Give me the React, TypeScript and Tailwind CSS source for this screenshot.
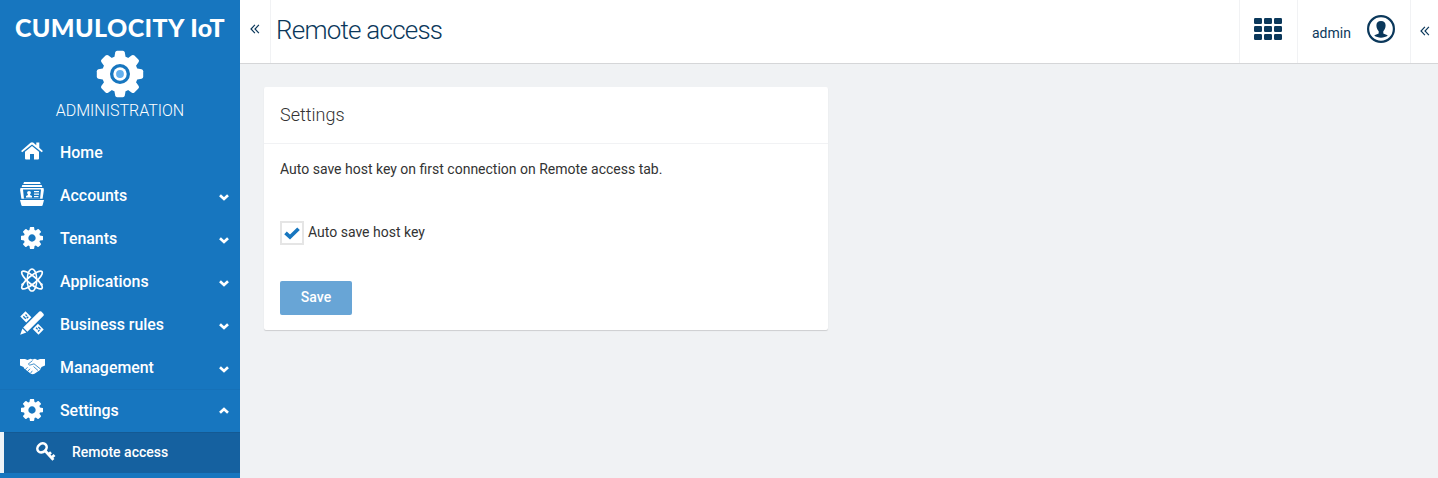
import type { ReactNode } from "react";

const TEETH = [0, 45, 90, 135, 180, 225, 270, 315];

function BigGear() {
  return (
    <svg width="48" height="48" viewBox="0 0 48 48" className="block">
      <circle cx="24" cy="24" r="14" fill="none" stroke="currentColor" strokeWidth="8" />
      {TEETH.map((a) => (
        <path
          key={a}
          transform={`rotate(${a} 24 24)`}
          d="M18 9.500 L19.200 2.400 Q19.500 0.800 21.200 0.800 H26.800 Q28.500 0.800 28.800 2.400 L30 9.500 Z"
          fill="currentColor"
        />
      ))}
      <circle cx="24" cy="24" r="6.700" fill="currentColor" />
      <circle cx="24" cy="24" r="3.900" fill="#64b0ee" />
    </svg>
  );
}

function Gear() {
  return (
    <svg width="22" height="22" viewBox="128 128 1536 1536" fill="currentColor" className="-mt-[2px]">
      <path d="M1152 896q0-106-75-181t-181-75-181 75-75 181 75 181 181 75 181-75 75-181zm512-109v222q0 12-8 23t-20 13l-185 28q-19 54-39 91 35 50 107 138 10 12 10 25t-9 23q-27 37-99 108t-94 71q-12 0-26-9l-138-108q-44 23-91 38-16 136-29 186-7 28-36 28h-222q-14 0-24.500-8.500t-11.500-21.500l-28-184q-49-16-90-37l-141 107q-10 9-25 9-14 0-25-11-126-114-165-168-7-10-7-23 0-12 8-23 15-21 51-66.500t54-70.500q-27-50-41-99l-183-27q-13-2-21-12.500t-8-23.500v-222q0-12 8-23t19-13l186-28q14-46 39-92-40-57-107-138-10-12-10-24 0-10 9-23 26-36 98.500-107.500t94.500-71.500q13 0 26 10l138 107q44-23 91-38 16-136 29-186 7-28 36-28h222q14 0 24.500 8.500t11.500 21.500l28 184q49 16 90 37l142-107q9-9 24-9 13 0 25 10 129 119 165 170 7 8 7 22 0 12-8 23-15 21-51 66.500t-54 70.500q26 50 41 98l183 28q13 2 21 12.500t8 23.500z" />
    </svg>
  );
}

function Home() {
  return (
    <svg width="24" height="24" viewBox="0 0 24 24" fill="currentColor" className="-mt-[3px]">
      <path d="M12 6.900 L19 12.800 V19.500 Q19 20.500 18 20.500 H14 V15 H10 V20.500 H6 Q5 20.500 5 19.500 V12.800 Z" />
      <path d="M1.100 12 L10.500 3.800 Q12 2.600 13.500 3.800 L16.300 6.200 V3.400 H19.300 V8.800 L22.900 12 L21.800 13.300 L12 5.400 L2.200 13.300 Z" />
    </svg>
  );
}

function Accounts() {
  return (
    <svg width="24" height="24" viewBox="0 0 24 24" fill="currentColor" className="-mt-[4px]">
      <path d="M4 0 H20 L20.700 2 H3.300 Z M2.300 3 H21.700 L22.300 5 H1.700 Z" />
      <path fillRule="evenodd" d="M0.500 6 H23.500 L23.900 8 L22.600 16.800 H1.400 L0.100 8 Z M3 7.500 L4 17 H20 L21 7.500 Z" />
      <circle cx="9" cy="10.800" r="1.900" />
      <path d="M8 11 H10 V13 L12 14 V15.500 H6 V14 L8 13 Z M14 9 H19 V10.200 H14 Z M14 11.500 H19 V12.700 H14 Z M14 14 H18.500 V15.200 H14 Z" />
      <path d="M0 18 H24 L22.700 23 Q22.500 24 21.500 24 H2.500 Q1.500 24 1.300 23 Z" />
    </svg>
  );
}

function Atom() {
  return (
    <svg width="24" height="24" viewBox="0 0 24 24" fill="none" stroke="currentColor" strokeWidth="1.700" className="-mt-[3px]">
      <ellipse cx="12" cy="12" rx="13" ry="3.900" transform="rotate(40 12 12)" />
      <ellipse cx="12" cy="12" rx="13" ry="3.900" transform="rotate(-40 12 12)" />
      <ellipse cx="12" cy="12" rx="4.800" ry="11.100" strokeWidth="1.500" />
      <circle cx="2.500" cy="16.500" r="1.200" fill="currentColor" stroke="none" />
      <circle cx="21.500" cy="16.500" r="1.200" fill="currentColor" stroke="none" />
    </svg>
  );
}

function PencilRuler() {
  return (
    <svg width="24" height="24" viewBox="0 0 24 24" fill="currentColor" className="-mt-[3px]">
      <path d="M5.500 0.300 L11.400 6.200 L6.200 11.400 L0.300 5.500 Z M18 12.800 L23.700 18.500 L18.500 23.700 L12.800 18 Z" />
      <path d="M3.300 5.300 L5.800 7.800 M5.500 3.500 L7 5 M8.300 5.700 L6.700 7.300 M16 16.700 L17.700 18.400 M18.300 16 L20.500 18.200 M18 20.500 L19.500 19" stroke="#1776bf" strokeWidth="1.300" />
      <path d="M19.300 0.500 Q20.400 -0.200 21.300 0.600 L23.400 2.700 Q24.200 3.600 23.500 4.700 L7.400 20.800 L3.200 16.600 Z" />
      <path d="M2.400 17.600 L6.400 21.600 L0.200 23.800 Z" />
    </svg>
  );
}

function Handshake() {
  return (
    <svg width="25" height="17" viewBox="0 0 25 17" fill="currentColor" className="-mt-[3px] shrink-0">
      <path d="M0 1 H5 L7.500 1.900 L10.500 0.800 L12.500 1.500 L15 0.800 L17.500 1.900 L20 1 H25 V7.500 L21.500 9 L20 12 L14.500 15.800 Q12.500 16.800 10.500 15.500 L4.200 10.500 L3.500 9 L0 7.500 Z" />
      <path d="M12.500 2.600 L8.300 6 Q9.300 8 12 6.500 L14 5.800 L20.500 11 M7.500 9.300 L5 11.800 M10 10.800 L7.500 13.500 M12.300 12.800 L10.500 15.300 M13.500 8.500 L18 12.500" fill="none" stroke="#1776bf" strokeWidth="0.800" />
    </svg>
  );
}

function KeyIcon() {
  return (
    <svg width="20" height="20" viewBox="0 0 20 20" fill="none" stroke="currentColor" className="-mt-[2px]">
      <ellipse cx="6" cy="5.900" rx="5" ry="4.100" transform="rotate(-42 6 5.900)" strokeWidth="2.600" />
      <path d="M8.700 8.200 L17.400 17.900 M18.500 13 L15.200 16 M15 10.300 L12.300 12.700" strokeWidth="2.800" />
    </svg>
  );
}

function Chevron({ up = false }: { up?: boolean }) {
  return (
    <svg width="10" height="7" viewBox="0 0 10 7" fill="none" stroke="currentColor" strokeWidth="2.700">
      <path d={up ? "M1 5.800 L5 2.100 L9 5.800" : "M1 1.200 L5 4.900 L9 1.200"} />
    </svg>
  );
}

function DoubleLeft() {
  return (
    <svg width="10" height="10" viewBox="0 0 10 10" fill="none" stroke="#0b385b" strokeWidth="1.200">
      <path d="M4.900 0.800 L1 5 L4.900 9.200 M8.900 0.800 L5 5 L8.900 9.200" />
    </svg>
  );
}

function Check() {
  return (
    <svg width="16" height="13" viewBox="0 0 16 13" fill="none" stroke="currentColor" strokeWidth="3.700">
      <path d="M1.500 5.800 L6 10 L14.500 1.700" />
    </svg>
  );
}

function Apps() {
  return (
    <svg width="28" height="22" viewBox="0 0 28 22" fill="#0b385b">
      {[0, 8, 16].map((y) =>
        [0, 10, 20].map((x) => <rect key={`${x}-${y}`} x={x} y={y} width="8" height="6" rx="1.200" />),
      )}
    </svg>
  );
}

function User() {
  return (
    <svg width="28" height="28" viewBox="0 0 28 28" fill="#0b385b">
      <circle cx="14" cy="14" r="12.900" fill="none" stroke="#0b385b" strokeWidth="2.200" />
      <path d="M14 6 C17 6 18.800 7.800 18.600 10.800 C18.500 13.500 17.300 15.200 16.300 16.300 V18.600 C17.500 19.600 20 19.600 20.800 20.600 C19 22 16.500 22.700 14 22.700 C11.500 22.700 9 22 7.200 20.600 C8 19.600 10.500 19.600 11.700 18.600 V16.300 C10.700 15.200 9.500 13.500 9.400 10.800 C9.200 7.800 11 6 14 6 Z" />
    </svg>
  );
}

const NAV: { label: string; icon: ReactNode; state?: "open" | "closed" }[] = [
  { label: "Home", icon: <Home /> },
  { label: "Accounts", icon: <Accounts />, state: "closed" },
  { label: "Tenants", icon: <Gear />, state: "closed" },
  { label: "Applications", icon: <Atom />, state: "closed" },
  { label: "Business rules", icon: <PencilRuler />, state: "closed" },
  { label: "Management", icon: <Handshake />, state: "closed" },
  { label: "Settings", icon: <Gear />, state: "open" },
];

function Sidebar() {
  return (
    <aside className="flex w-60 shrink-0 flex-col bg-[#1776bf] text-white">
      <div className="flex h-[131px] flex-col items-center pt-[13px]">
        <div className="h-7 whitespace-nowrap font-[Lato] text-[25px] leading-7 font-black tracking-[0.4px]">CUMULOCITY IoT</div>
        <div className="mt-[9px]">
          <BigGear />
        </div>
        <div className="mt-[3px] text-[16px] leading-5 font-light">ADMINISTRATION</div>
      </div>
      <nav>
        {NAV.map((item) => (
          <div
            key={item.label}
            className={`flex h-[43px] items-center pr-[11px] pl-5 ${item.state === "open" ? "border-t border-[#1671b8]" : ""}`}
          >
            <span className="flex w-6 shrink-0 items-center justify-center">{item.icon}</span>
            <span className="ml-4 flex-1 text-[15.900px] leading-5 font-medium">{item.label}</span>
            {item.state && (
              <span className={item.state === "open" ? "pb-[2px]" : "pt-[3px]"}>
                <Chevron up={item.state === "open"} />
              </span>
            )}
          </div>
        ))}
        <div className="flex h-[41px] items-center border-l-4 border-[#eef3f8] bg-[#1561a0] pl-8 shadow-[inset_0_1px_0_#145a94]">
          <KeyIcon />
          <span className="ml-4 pb-[1px] text-[14px] leading-5 font-medium">Remote access</span>
        </div>
      </nav>
    </aside>
  );
}

function Header() {
  return (
    <header className="flex h-16 shrink-0 items-stretch border-b border-[#d5d6d8] bg-white text-[#0b385b]">
      <div className="flex w-[31px] items-center justify-center border-r border-[#f1f2f4] pb-[5px]">
        <DoubleLeft />
      </div>
      <h1 className="flex flex-1 items-center pb-[3px] pl-[5px] text-[26px] font-light tracking-[-0.770px]">Remote access</h1>
      <div className="flex w-[58px] items-center border-l border-[#f1f2f4] pb-[5px] pl-[14px]">
        <Apps />
      </div>
      <div className="flex w-[113px] items-center border-l border-[#f1f2f4] pl-[14px]">
        <span className="w-[55px] pt-1 text-[14px]">admin</span>
        <span className="pb-[5px]">
          <User />
        </span>
      </div>
      <div className="flex w-7 items-center justify-center border-l border-[#f1f2f4] pb-[1px]">
        <DoubleLeft />
      </div>
    </header>
  );
}

export default function App() {
  return (
    <div className="flex h-[478px] w-[1438px] overflow-hidden bg-[#f0f2f4] font-[Roboto,sans-serif]">
      <Sidebar />
      <div className="flex flex-1 flex-col">
        <Header />
        <main className="px-6 pt-[23px]">
          <section className="h-[243px] w-[564px] rounded-[2px] bg-white text-[#333] shadow-[0_1px_1px_rgba(0,0,0,0.15)]">
            <h2 className="flex h-[57px] items-center border-b border-[#f1f2f4] px-4 pb-[1px] text-[18px] font-light">Settings</h2>
            <div className="px-4 pt-[15px]">
              <p className="text-[14px] leading-5">Auto save host key on first connection on Remote access tab.</p>
              <label className="mt-[42px] flex h-6 items-center gap-1 text-[14px]">
                <span className="flex h-6 w-6 items-center justify-center border-2 border-[#e5e5e5] bg-white pt-[1px] text-[#1776bf]">
                  <Check />
                </span>
                <span className="pb-[2px]">Auto save host key</span>
              </label>
              <button className="mt-9 flex h-[34px] w-[72px] items-center justify-center rounded-[2px] bg-[#68a5d6] pb-[1px] text-[14px] font-medium text-white">
                Save
              </button>
            </div>
          </section>
        </main>
      </div>
    </div>
  );
}
